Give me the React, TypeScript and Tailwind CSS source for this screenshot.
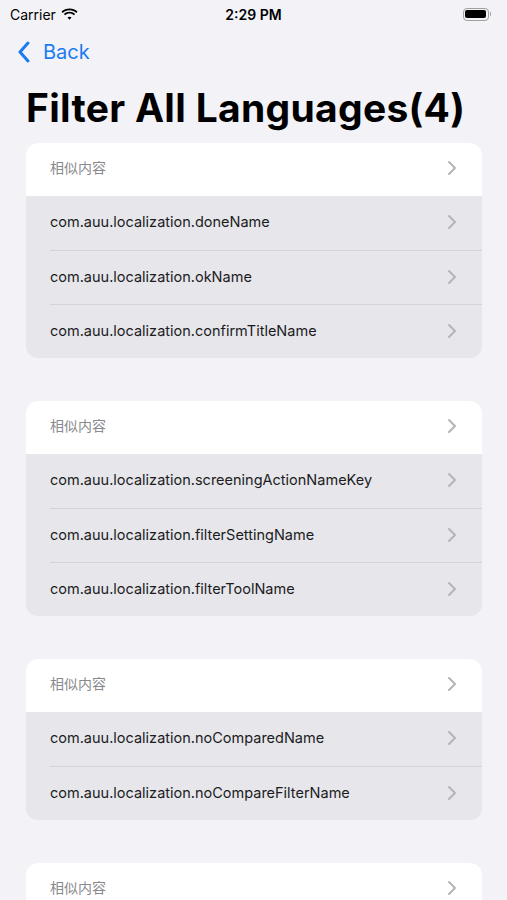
import React from "react";

const groups: string[][] = [
  [
    "com.auu.localization.doneName",
    "com.auu.localization.okName",
    "com.auu.localization.confirmTitleName",
  ],
  [
    "com.auu.localization.screeningActionNameKey",
    "com.auu.localization.filterSettingName",
    "com.auu.localization.filterToolName",
  ],
  [
    "com.auu.localization.noComparedName",
    "com.auu.localization.noCompareFilterName",
  ],
  [],
];

function Chevron() {
  return (
    <svg width="10" height="16" viewBox="0 0 10 16" className="shrink-0">
      <path d="M2 2 L8 8 L2 14" fill="none" stroke="#b4b4b9" strokeWidth="2" strokeLinecap="round" strokeLinejoin="round" />
    </svg>
  );
}

function StatusBar() {
  return (
    <div className="relative flex h-[28px] items-center px-[10px] text-[14px] text-black">
      <div className="flex items-center gap-[5px]">
        <span>Carrier</span>
        <svg width="17" height="12" viewBox="0 0 17 12">
          <path d="M8.5 2.2c2.6 0 5 1 6.8 2.7l1.2-1.3C14.4 1.6 11.6.4 8.5.4S2.6 1.6.5 3.6l1.2 1.3C3.5 3.2 5.9 2.2 8.5 2.2z" fill="#000" />
          <path d="M8.5 5.5c1.7 0 3.2.6 4.4 1.7l1.2-1.3C12.6 4.5 10.6 3.7 8.5 3.7S4.4 4.5 2.9 5.9l1.2 1.3C5.3 6.1 6.8 5.5 8.5 5.5z" fill="#000" />
          <path d="M8.5 8.8c.8 0 1.5.3 2 .8l-2 2.2-2-2.2c.5-.5 1.2-.8 2-.8z" fill="#000" />
        </svg>
      </div>
      <span className="absolute left-1/2 -translate-x-1/2 font-semibold">2:29 PM</span>
      <div className="ml-auto mr-[6px] flex items-center">
        <div className="flex h-[13px] w-[26px] items-center rounded-[4px] border border-[#a0a0a0] p-[1.5px]">
          <div className="h-full w-full rounded-[2px] bg-black" />
        </div>
        <div className="ml-[1px] h-[4px] w-[1.5px] rounded-r bg-[#a0a0a0]" />
      </div>
    </div>
  );
}

export default function App() {
  return (
    <div
      className="h-[900px] overflow-hidden bg-[#f2f2f7]"
      style={{ fontFamily: 'Inter, "Noto Sans CJK SC", sans-serif' }}
    >
      <StatusBar />
      <div className="flex h-[48px] items-center gap-[12px] pl-[17px] text-[#1a7cf2]">
        <svg width="14" height="22" viewBox="0 0 14 22">
          <path d="M11 2 L3 11 L11 20" fill="none" stroke="#1a7cf2" strokeWidth="3" strokeLinecap="round" strokeLinejoin="round" />
        </svg>
        <span className="text-[20px]">Back</span>
      </div>
      <h1 className="pl-[26px] pt-[10px] text-[39px] leading-[44px] font-bold tracking-[0.3px] text-black">
        Filter All Languages(4)
      </h1>
      <div className="mt-[13px] flex flex-col gap-[43px] pl-[26px] pr-[25px]">
        {groups.map((rows, gi) => (
          <div key={gi} className="overflow-hidden rounded-[12px] bg-[#e6e6eb]">
            <div className="flex h-[53px] items-center bg-white pb-[4px] pl-[24px] pr-[25px]">
              <span className="flex-1 text-[14px] text-[#8a8a8e]">相似内容</span>
              <Chevron />
            </div>
            {rows.map((r, ri) => (
              <div key={ri} className="pl-[24px]">
                <div
                  className={
                    "flex h-[54px] items-center pb-[2px] pr-[25px] " +
                    (ri > 0 ? "border-t border-[#d4d4d8]" : "")
                  }
                >
                  <span className="flex-1 text-[14.5px] text-[#1c1c1e]">{r}</span>
                  <Chevron />
                </div>
              </div>
            ))}
          </div>
        ))}
      </div>
    </div>
  );
}
